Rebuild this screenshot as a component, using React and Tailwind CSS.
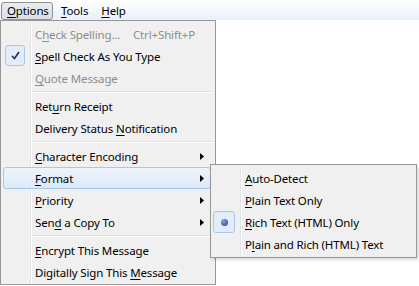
import React from "react";

const font = { fontFamily: '"Segoe UI", "Noto Sans", sans-serif' };

const Mn = ({ children }) => <span className="underline underline-offset-2">{children}</span>;

const Arrow = () => (
  <svg width="4" height="7" viewBox="0 0 4 7" className="absolute left-[197px] top-[8px]">
    <path d="M0 0 L4 3.5 L0 7 Z" fill="#000" />
  </svg>
);

const Item = ({ children, disabled, shortcut, submenu, active, mark }) => (
  <div className="relative h-[22px] flex items-center text-[11.5px] tracking-[-0.15px]">
    {active && (
      <div className="absolute inset-y-0 left-0 right-[2px] rounded-[3px] border border-[#a8c7ef] bg-gradient-to-b from-[#eef4fc] to-[#dde9f8]" />
    )}
    {mark === "check" && (
      <div className="absolute left-[2px] top-0 w-[20px] h-[21px] rounded-[3px] border border-[#a8c7ef] bg-[#e3edfa] flex items-center justify-center">
        <svg width="9" height="9" viewBox="0 0 9 9">
          <path d="M1 5 L3.5 7.5 L8 1" stroke="#152a7a" strokeWidth="1.6" fill="none" />
        </svg>
      </div>
    )}
    {mark === "radio" && (
      <div className="absolute left-0 top-0 w-[22px] h-[22px] rounded-[3px] border border-[#a8c7ef] bg-[#e3edfa] flex items-center justify-center">
        <div className="w-[7px] h-[7px] rounded-full bg-[radial-gradient(circle_at_35%_35%,#8d9be0,#283a9a)]" />
      </div>
    )}
    <span className={`relative pt-[1px] pl-[32px] ${disabled ? "text-[#8d8d8d]" : "text-[#000]"}`}>
      {children}
    </span>
    {shortcut && (
      <span className="absolute left-[130px] pt-[1px] text-[#8d8d8d]">{shortcut}</span>
    )}
    {submenu && <Arrow />}
  </div>
);

const Sep = () => (
  <div className="h-[6px] flex flex-col justify-center pl-[28px]">
    <div className="h-px bg-[#e0e0e0]" />
    <div className="h-px bg-white" />
  </div>
);

export default function App() {
  return (
    <div className="relative w-[419px] h-[286px] bg-white overflow-hidden" style={font}>
      <div className="h-[20px] flex items-center text-[11.5px] tracking-[-0.15px] bg-gradient-to-b from-[#ffffff] to-[#eaf0f8]">
        <div className="h-[18px] mt-[2px] ml-[1px] w-[52px] pl-[5px] flex items-center rounded-[3px] border border-[#8e8f8f] bg-gradient-to-b from-[#e8ecf0] to-[#dbe0e6]">
          <Mn>O</Mn>ptions
        </div>
        <div className="ml-[8px] mt-[1px]"><Mn>T</Mn>ools</div>
        <div className="ml-[13px] mt-[1px]"><Mn>H</Mn>elp</div>
      </div>

      <div className="absolute left-0 top-[20px] w-[216px] h-[265px] border border-[#979797] bg-[#f0f0f0] pt-[2px] pl-[2px] pr-[2px]">
        <div className="absolute left-[29px] top-0 bottom-0 w-px bg-[#e2e3e3]" />
        <div className="absolute left-[30px] top-0 bottom-0 w-px bg-white" />
        <Item disabled shortcut="Ctrl+Shift+P">C<Mn>h</Mn>eck Spelling...</Item>
        <Item mark="check"><Mn>S</Mn>pell Check As You Type</Item>
        <Item disabled><Mn>Q</Mn>uote Message</Item>
        <Sep />
        <Item>Ret<Mn>u</Mn>rn Receipt</Item>
        <Item>Delivery Status <Mn>N</Mn>otification</Item>
        <Sep />
        <Item submenu><Mn>C</Mn>haracter Encoding</Item>
        <Item submenu active><Mn>F</Mn>ormat</Item>
        <Item submenu><Mn>P</Mn>riority</Item>
        <Item submenu>Sen<Mn>d</Mn> a Copy To</Item>
        <Sep />
        <Item><Mn>E</Mn>ncrypt This Message</Item>
        <Item>Digitally Sign This <Mn>M</Mn>essage</Item>
      </div>

      <div className="absolute left-[210px] top-[164px] w-[207px] h-[94px] border border-[#979797] bg-[#f0f0f0] p-[2px] shadow-[2px_2px_3px_rgba(0,0,0,0.15)]">
        <div className="absolute left-[29px] top-0 bottom-0 w-px bg-[#e2e3e3]" />
        <div className="absolute left-[30px] top-0 bottom-0 w-px bg-white" />
        <Item><Mn>A</Mn>uto-Detect</Item>
        <Item><Mn>P</Mn>lain Text Only</Item>
        <Item mark="radio"><Mn>R</Mn>ich Text (HTML) Only</Item>
        <Item>P<Mn>l</Mn>ain and Rich (HTML) Text</Item>
      </div>
    </div>
  );
}
